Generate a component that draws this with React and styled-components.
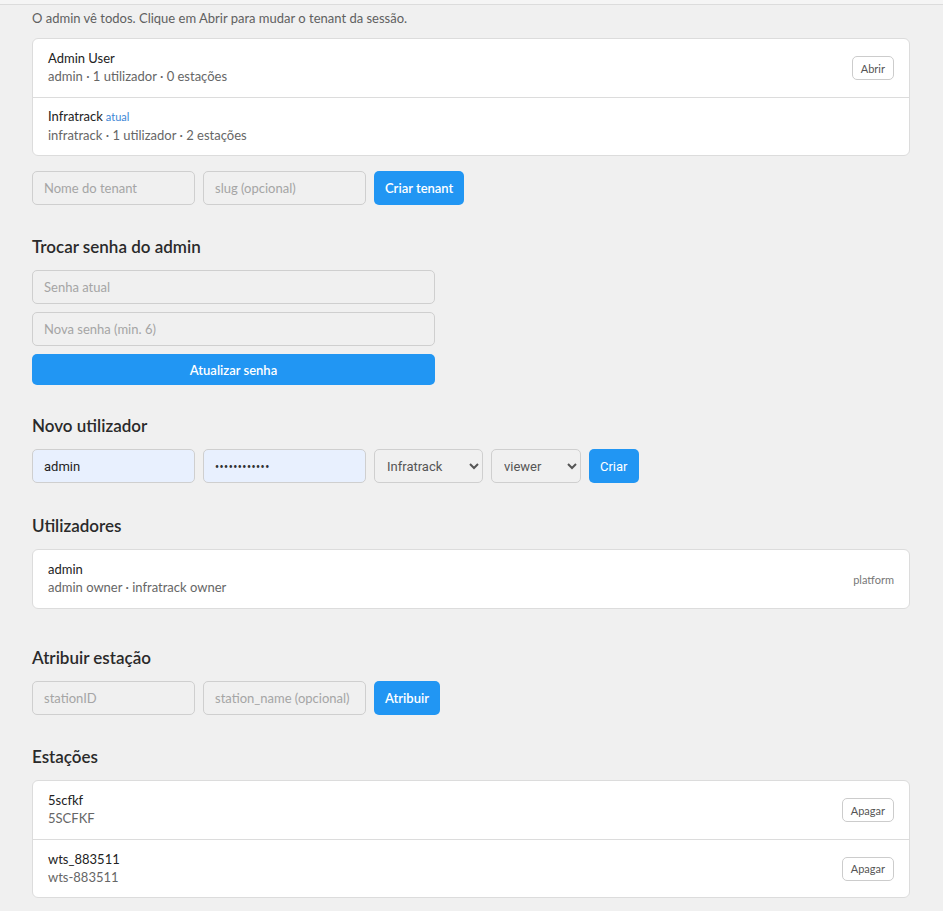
import React from 'react';
import styled, { createGlobalStyle } from 'styled-components';

const GlobalStyle = createGlobalStyle`
  html, body {
    margin: 0;
    padding: 0;
    background: #f0f0f0;
  }
  body {
    font-family: Lato, "Open Sans", sans-serif;
    color: #222;
  }
`;

const TopEdge = styled.div`
  height: 4px;
  background: #f5f5f5;
  border-bottom: 1px solid #dcdcdc;
`;

const Page = styled.main`
  padding: 5px 33px 14px 32px;
`;

const Intro = styled.p`
  margin: 0 0 12px;
  font-size: 13px;
  line-height: 16px;
  color: #606060;
`;

const Section = styled.section`
  margin-top: ${({ $gap }) => $gap || 30}px;
`;

const Heading = styled.h3`
  margin: 0 0 12px;
  font-size: 17px;
  line-height: 22px;
  font-weight: 600;
  color: #2a2a2a;
`;

const Card = styled.div`
  background: #fff;
  border: 1px solid #dcdcdc;
  border-radius: 6px;
  overflow: hidden;
`;

const Row = styled.div`
  display: flex;
  align-items: center;
  justify-content: space-between;
  height: 58px;
  padding: 0 15px;
  box-sizing: border-box;

  & + & {
    border-top: 1px solid #dcdcdc;
  }
`;

const RowText = styled.div`
  display: flex;
  flex-direction: column;
  gap: 2px;
  margin-top: -2px;
`;

const Title = styled.div`
  font-size: 13px;
  line-height: 16px;
  color: #222;
`;

const Tag = styled.span`
  margin-left: 3px;
  font-size: 11px;
  color: #3b86d6;
`;

const Sub = styled.div`
  font-size: 13px;
  line-height: 16px;
  color: #666;
`;

const Meta = styled.span`
  font-size: 11px;
  color: #777;
`;

const SmallButton = styled.button`
  height: 24px;
  padding: 0 8px;
  font-family: inherit;
  font-size: 11px;
  color: #555;
  background: #fff;
  border: 1px solid #ccc;
  border-radius: 5px;
`;

const FormRow = styled.div`
  display: flex;
  align-items: center;
  gap: 8px;
  margin-top: ${({ $top }) => $top || 0}px;
`;

const Stack = styled.div`
  display: flex;
  flex-direction: column;
  gap: 8px;
  width: 403px;
`;

const Field = styled.input`
  box-sizing: border-box;
  width: ${({ $w }) => ($w ? `${$w}px` : '100%')};
  height: 34px;
  padding: 0 11px;
  font-family: inherit;
  font-size: 13px;
  color: #222;
  background: ${({ $filled }) => ($filled ? '#e8f0fe' : '#f0f0f0')};
  border: 1px solid #cfcfcf;
  border-radius: 5px;
  outline: none;

  &::placeholder {
    color: #a5a5a5;
  }
`;

const SecretField = styled(Field)`
  font-size: 7px;
  letter-spacing: 0.5px;
  color: #333;
`;

const Select = styled.select`
  box-sizing: border-box;
  width: ${({ $w }) => $w}px;
  height: 34px;
  padding: 0 6px 0 8px;
  font-family: Roboto, sans-serif;
  font-size: 13px;
  color: #555;
  background: #f0f0f0;
  border: 1px solid #cfcfcf;
  border-radius: 5px;
`;

const PrimaryButton = styled.button`
  box-sizing: border-box;
  height: ${({ $h }) => $h || 34}px;
  width: ${({ $block }) => ($block ? '100%' : 'auto')};
  padding: 0 11px;
  font-family: ${({ $alt }) => ($alt ? 'Roboto, sans-serif' : 'inherit')};
  font-size: 13px;
  font-weight: ${({ $alt }) => ($alt ? 400 : 600)};
  color: #fff;
  background: #2196f3;
  border: none;
  border-radius: 5px;
`;

const tenants = [
  { name: 'Admin User', sub: 'admin · 1 utilizador · 0 estações', open: true },
  { name: 'Infratrack', current: true, sub: 'infratrack · 1 utilizador · 2 estações' },
];

const stations = [
  { id: '5scfkf', name: '5SCFKF' },
  { id: 'wts_883511', name: 'wts-883511' },
];

const App = () => (
  <>
    <GlobalStyle />
    <TopEdge />
    <Page>
      <Intro>O admin vê todos. Clique em Abrir para mudar o tenant da sessão.</Intro>

      <Card>
        {tenants.map((t) => (
          <Row key={t.name}>
            <RowText>
              <Title>
                {t.name}
                {t.current && <Tag>atual</Tag>}
              </Title>
              <Sub>{t.sub}</Sub>
            </RowText>
            {t.open && <SmallButton>Abrir</SmallButton>}
          </Row>
        ))}
      </Card>

      <FormRow $top={15}>
        <Field $w={163} placeholder="Nome do tenant" />
        <Field $w={163} placeholder="slug (opcional)" />
        <PrimaryButton>Criar tenant</PrimaryButton>
      </FormRow>

      <Section $gap={31}>
        <Heading>Trocar senha do admin</Heading>
        <Stack>
          <Field type="password" placeholder="Senha atual" />
          <Field type="password" placeholder="Nova senha (min. 6)" />
          <PrimaryButton $block $h={31}>Atualizar senha</PrimaryButton>
        </Stack>
      </Section>

      <Section $gap={30}>
        <Heading>Novo utilizador</Heading>
        <FormRow>
          <Field $w={163} $filled defaultValue="admin" style={{ fontFamily: 'Roboto, sans-serif' }} />
          <SecretField $w={163} $filled type="password" defaultValue="adminpass123" />
          <Select $w={109} defaultValue="infratrack">
            <option value="infratrack">Infratrack</option>
            <option value="admin">Admin User</option>
          </Select>
          <Select $w={90} defaultValue="viewer">
            <option value="viewer">viewer</option>
            <option value="editor">editor</option>
            <option value="owner">owner</option>
          </Select>
          <PrimaryButton $alt>Criar</PrimaryButton>
        </FormRow>
      </Section>

      <Section $gap={32}>
        <Heading>Utilizadores</Heading>
        <Card>
          <Row>
            <RowText>
              <Title>admin</Title>
              <Sub>admin owner · infratrack owner</Sub>
            </RowText>
            <Meta>platform</Meta>
          </Row>
        </Card>
      </Section>

      <Section $gap={38}>
        <Heading>Atribuir estação</Heading>
        <FormRow>
          <Field $w={163} placeholder="stationID" />
          <Field $w={163} placeholder="station_name (opcional)" />
          <PrimaryButton>Atribuir</PrimaryButton>
        </FormRow>
      </Section>

      <Section $gap={31}>
        <Heading>Estações</Heading>
        <Card>
          {stations.map((s) => (
            <Row key={s.id}>
              <RowText>
                <Title>{s.id}</Title>
                <Sub>{s.name}</Sub>
              </RowText>
              <SmallButton>Apagar</SmallButton>
            </Row>
          ))}
        </Card>
      </Section>
    </Page>
  </>
);

export default App;
